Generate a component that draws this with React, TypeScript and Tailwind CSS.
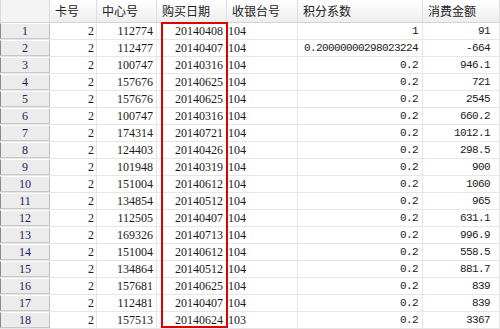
import React from 'react'

// ─── 데이터 ──────────────────────────────────────────────────────────────────

const COLS = [
  { key: 'card', label: '卡号', w: 'w-[47px]' },
  { key: 'center', label: '中心号', w: 'w-[60px]' },
  { key: 'date', label: '购买日期', w: 'w-[70px]' },
  { key: 'till', label: '收银台号', w: 'w-[71px]' },
  { key: 'rate', label: '积分系数', w: 'w-[125px]' },
  { key: 'amount', label: '消费金额', w: 'w-[77px]' },
] as const

const ROWS: [string, string, string, string, string, string][] = [
  ['2', '112774', '20140408', '104', '1', '91'],
  ['2', '112477', '20140407', '104', '0.20000000298023224', '-664'],
  ['2', '100747', '20140316', '104', '0.2', '946.1'],
  ['2', '157676', '20140625', '104', '0.2', '721'],
  ['2', '157676', '20140625', '104', '0.2', '2545'],
  ['2', '100747', '20140316', '104', '0.2', '660.2'],
  ['2', '174314', '20140721', '104', '0.2', '1012.1'],
  ['2', '124403', '20140426', '104', '0.2', '298.5'],
  ['2', '101948', '20140319', '104', '0.2', '900'],
  ['2', '151004', '20140612', '104', '0.2', '1060'],
  ['2', '134854', '20140512', '104', '0.2', '965'],
  ['2', '112505', '20140407', '104', '0.2', '631.1'],
  ['2', '169326', '20140713', '104', '0.2', '996.9'],
  ['2', '151004', '20140612', '104', '0.2', '558.5'],
  ['2', '134864', '20140512', '104', '0.2', '881.7'],
  ['2', '157681', '20140625', '104', '0.2', '839'],
  ['2', '112481', '20140407', '104', '0.2', '839'],
  ['2', '157513', '20140624', '103', '0.2', '3367'],
]

const serif = "font-['Liberation_Serif','Noto_Sans_CJK_SC',serif] text-[12px]"
const mono = "font-['Liberation_Mono',monospace] text-[11px] tracking-[-0.6px]"

// ─── 컴포넌트 ────────────────────────────────────────────────────────────────

function HeaderRow() {
  return (
    <div className="flex h-[23px] border-b border-[#d4d4d4] bg-gradient-to-b from-white to-[#eeeeee]">
      <div className="w-[50px] shrink-0 border-l border-[#8a8a8a] bg-[#f3f3f3] border-r border-[#dadada]" />
      {COLS.map(c => (
        <div
          key={c.key}
          className={`${c.w} shrink-0 flex items-center pl-[5px] border-r border-[#dedede]
            font-['Noto_Sans_CJK_SC',sans-serif] text-[12px] text-[#222]`}
        >
          {c.label}
        </div>
      ))}
    </div>
  )
}

function DataRow({ n, row }: { n: number; row: (typeof ROWS)[number] }) {
  const [card, center, date, till, rate, amount] = row
  const cell = 'shrink-0 h-full flex items-center border-r border-[#e6e6e6] text-[#1a1a1a]'
  return (
    <div className="flex h-[17px] border-b border-[#e6e6e6]">
      <div
        className={`w-[50px] shrink-0 flex items-center justify-center border-l border-[#8a8a8a]
          bg-[#ececec] border-t border-t-white border-b border-b-[#c8c8c8] border-r border-r-[#bdbdbd]
          ${serif} text-[#1c1c5c]`}
      >
        {n}
      </div>
      <div className={`${cell} w-[47px] justify-end pr-[2px] ${serif}`}>{card}</div>
      <div className={`${cell} w-[60px] justify-end pr-[3px] ${serif}`}>{center}</div>
      <div className={`${cell} w-[70px] justify-end pr-[3px] ${serif}`}>{date}</div>
      <div className={`${cell} w-[71px] pl-[1px] ${serif}`}>{till}</div>
      <div className={`${cell} w-[125px] justify-end pr-[4px] ${mono}`}>{rate}</div>
      <div className={`${cell} w-[77px] justify-end pr-[9px] ${mono}`}>{amount}</div>
    </div>
  )
}

export default function App() {
  return (
    <div className="relative w-[500px] h-[329px] overflow-hidden bg-white">
      <HeaderRow />
      {ROWS.map((r, i) => (
        <DataRow key={i} n={i + 1} row={r} />
      ))}
      {/* 강조 박스 */}
      <div className="absolute left-[161px] top-[22px] w-[67px] h-[306px] border-2 border-[#e00000] pointer-events-none" />
    </div>
  )
}
